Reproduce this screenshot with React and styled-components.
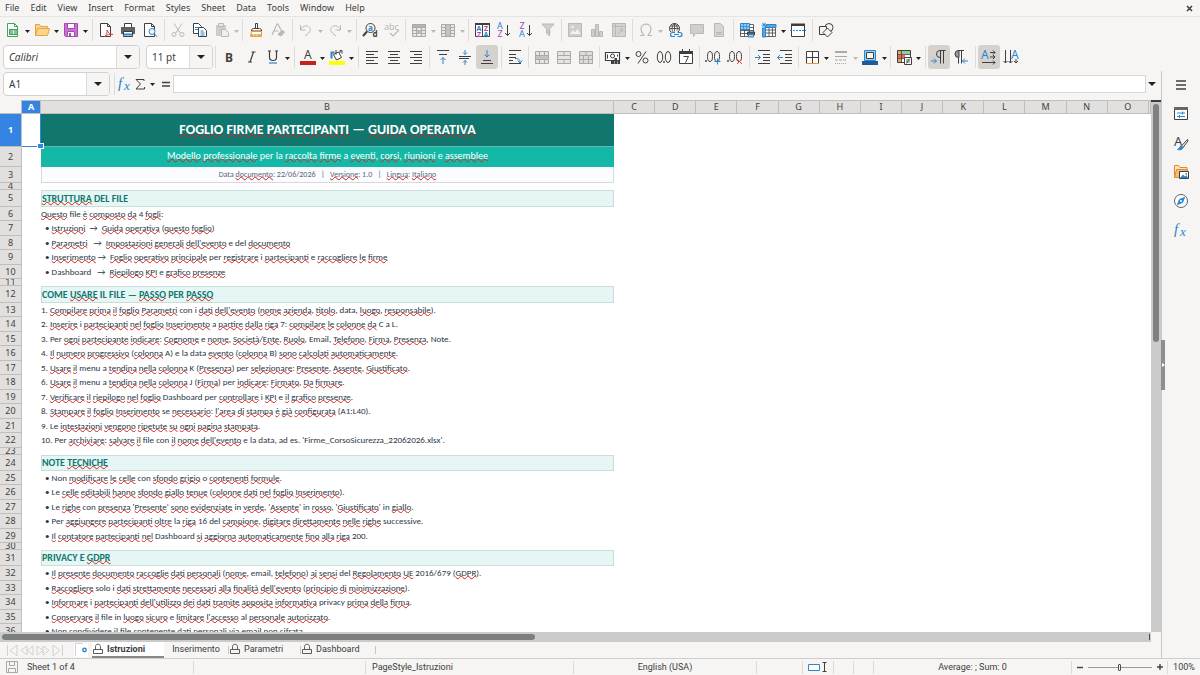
import React from "react";
import styled, { createGlobalStyle, css } from "styled-components";

const ui = '"Noto Sans", "Open Sans", sans-serif';
const compact = 'Roboto, "Noto Sans", sans-serif';
const cellFont = 'Carlito, Lato, "Noto Sans", sans-serif';
const ink = "#3f3f3f";
const line = "#d3d1cf";
const blue = "#2a85cf";
const dim = "#b9b8b6";

const Global = createGlobalStyle`
  *, *::before, *::after { box-sizing: border-box; }
  html, body, #root { height: 100%; }
  body { margin: 0; overflow: hidden; background: #f6f5f3; font: 10px/14px ${ui}; color: #3c3c3c; }
  button, input { font: inherit; color: inherit; }
  svg { overflow: visible; }
`;

/* ---------- frame ---------- */
const Shell = styled.div`
  height: 100vh;
  display: flex;
  flex-direction: column;
`;
const MenuBar = styled.nav`
  display: flex;
  align-items: center;
  gap: 11px;
  height: 17px;
  flex: none;
  padding: 0 6px 0 5px;
  border-bottom: 1px solid #e6e4e2;
  font-size: 9px;
`;
const MenuItem = styled.button`
  border: 0;
  padding: 0;
  background: none;
`;
const CloseDoc = styled.button`
  display: flex;
  border: 0;
  padding: 0;
  background: none;
  margin-left: auto;
`;
const Toolbar = styled.div`
  display: flex;
  align-items: center;
  height: ${(p) => p.$h}px;
  flex: none;
  padding-left: ${(p) => p.$inset}px;
`;
const ToolButton = styled.button`
  display: grid;
  place-items: center;
  flex: none;
  width: 22px;
  height: 24px;
  border: 0;
  border-radius: 3px;
  padding: 0;
  background: ${(p) => (p.$on ? "#d5d1cd" : "none")};
`;
const DropButton = styled.button`
  display: grid;
  place-items: center;
  flex: none;
  width: 7px;
  height: 24px;
  border: 0;
  padding: 2px 0 0;
  background: none;
`;
const Separator = styled.span`
  flex: none;
  width: ${(p) => (p.$wide ? 6 : 5)}px;
  height: 22px;
  background: linear-gradient(#dedcda, #dedcda) center / 1px 100% no-repeat;
`;
const Combo = styled.div`
  display: flex;
  flex: none;
  width: ${(p) => p.$w}px;
  height: 24px;
  margin-right: ${(p) => p.$after || 0}px;
  border: 1px solid ${line};
  border-radius: 4px;
  background: #fff;
  overflow: hidden;
`;
const ComboInput = styled.input`
  flex: 1;
  min-width: 0;
  border: 0;
  padding: 0 5px;
  background: none;
  font-style: ${(p) => (p.$italic ? "italic" : "normal")};
`;
const ComboArrow = styled.button`
  display: grid;
  place-items: center;
  flex: none;
  width: 23px;
  border: 0;
  border-left: 1px solid #dddbd9;
  padding: 0;
  background: #f6f5f4;
`;
const Middle = styled.div`
  flex: 1;
  min-height: 0;
  display: flex;
`;
const Work = styled.main`
  position: relative;
  flex: 1;
  min-width: 0;
  display: flex;
  flex-direction: column;
`;
const FormulaBar = styled.div`
  display: flex;
  align-items: center;
  flex: none;
  height: 29px;
  padding: 0 4px 3px 3px;
`;
const FormulaButton = styled.button`
  display: grid;
  place-items: center;
  flex: none;
  width: ${(p) => p.$w}px;
  height: 22px;
  border: 0;
  padding: 0;
  background: none;
`;
const FormulaInput = styled.input`
  flex: 1;
  min-width: 0;
  height: 18px;
  border: 1px solid #d9d7d5;
  padding: 0 4px;
  background: #fff;
`;

/* ---------- sheet ---------- */
const SheetArea = styled.div`
  flex: 1;
  min-height: 0;
  display: flex;
`;
const SheetView = styled.div`
  flex: 1;
  min-width: 0;
  overflow: hidden;
  background: #fff;
`;
const Grid = styled.table`
  width: 100%;
  table-layout: fixed;
  border-collapse: separate;
  border-spacing: 0;
`;
const ColHead = styled.th`
  height: 14px;
  padding: 0;
  font-weight: ${(p) => (p.$on ? 700 : 400)};
  font-size: 9px;
  line-height: 12px;
  color: ${(p) => (p.$on ? "#fff" : ink)};
  background: ${(p) => (p.$on ? "#3584e4" : "#e1e0de")};
  border: solid #bfbebc;
  border-width: 1px 1px 1px 0;
`;
const Corner = styled.th`
  padding: 0;
  background: #f6f5f3;
  border: solid #bfbebc;
  border-width: 0 1px 1px 0;
`;
const RowHead = styled.th`
  height: ${(p) => p.$h}px;
  padding: 0;
  font-size: 9px;
  font-weight: ${(p) => (p.$on ? 700 : 400)};
  color: ${(p) => (p.$on ? "#fff" : ink)};
  background: ${(p) => (p.$on ? "#3584e4" : "#e1e0de")};
  border: solid #bfbebc;
  border-width: 0 1px 1px 0;
`;
const Clip = styled.div`
  height: ${(p) => p.$h}px;
  line-height: ${(p) => p.$h}px;
  overflow: hidden;
  white-space: pre;
`;
const kinds = {
  title: css`
    text-align: center;
    font-size: 14px;
    font-weight: 700;
    color: #fff;
    background: #10766e;
    border-bottom: 1px solid #6fb5ae;
  `,
  subtitle: css`
    text-align: center;
    font-size: 10px;
    color: #fff;
    background: #14b8a6;
  `,
  meta: css`
    text-align: center;
    font-size: 8px;
    color: #5b6675;
    background: #fafcff;
    border: solid #d5d9de;
    border-width: 0 1px 1px 1px;
  `,
  section: css`
    font-size: 10px;
    font-weight: 700;
    color: #10766e;
    background: #e6f6f4;
    border: 1px solid #c8dedb;
  `,
  text: css`
    color: #2c3644;
    font-size: 9px;
  `,
};
const Cell = styled.td`
  padding: 0;
  vertical-align: top;
  font-family: ${cellFont};
  ${(p) => kinds[p.$kind]}
`;
const Active = styled.td`
  position: relative;
  padding: 0;
  border-bottom: 1px solid #3584e4;
  border-right: 1px solid #3584e4;
  &::after {
    content: "";
    position: absolute;
    right: -3px;
    bottom: -2px;
    width: 5px;
    height: 4px;
    background: #3584e4;
    outline: 1px solid #fff;
  }
`;
const Blank = styled.td`
  padding: 0;
`;
const Typo = styled.span`
  text-decoration: underline wavy #d8201c 1px;
  text-decoration-skip-ink: none;
  text-underline-offset: -1px;
`;
const VTrack = styled.div`
  flex: none;
  width: 10px;
  background: #cbcbcb;
  border-top: 2px solid #3c3c3c;
  padding: 2px 2px 0;
`;
const VThumb = styled.div`
  height: 45%;
  border-radius: 3px;
  background: #808080;
`;
const HTrack = styled.div`
  flex: none;
  height: 10px;
  margin-right: 10px;
  padding: 2px;
  background: linear-gradient(#4c4c4c, #4c4c4c) right 1px center / 1px 6px no-repeat #cbcbcb;
`;
const HThumb = styled.div`
  width: 46.5%;
  height: 6px;
  border-radius: 3px;
  background: #7d7f7e;
`;
const Tabs = styled.div`
  display: flex;
  align-items: center;
  flex: none;
  height: 16px;
  padding-left: 5px;
  font: 9px/14px ${ui};
`;
const TabNav = styled.button`
  display: grid;
  place-items: center;
  width: 15px;
  height: 14px;
  border: 0;
  padding: 0;
  background: none;
`;
const AddTab = styled.button`
  display: grid;
  place-items: center;
  width: 14px;
  height: 14px;
  margin: 0 4px 0 9px;
  border: 0;
  padding: 0;
  background: #fff;
`;
const Tab = styled.button`
  display: flex;
  align-items: center;
  justify-content: ${(p) => (p.$locked ? "flex-start" : "center")};
  gap: 4px;
  width: ${(p) => p.$w}px;
  height: 16px;
  border: 0;
  border-bottom: 2px solid ${(p) => (p.$on ? "#8a8987" : "transparent")};
  padding: 0 1px;
  background: ${(p) => (p.$on ? "#fff" : "none")};
  font-family: ${compact};
  font-weight: ${(p) => (p.$on ? 700 : 400)};
`;
const TabRule = styled.span`
  width: 1px;
  height: 8px;
  background: #c5c4c2;
`;

/* ---------- sidebar and status ---------- */
const Sidebar = styled.aside`
  display: flex;
  flex-direction: column;
  align-items: center;
  gap: 5px;
  flex: none;
  width: 39px;
  padding-top: 2px;
  border-left: 1px solid #c9c7c5;
`;
const SideButton = styled.button`
  display: grid;
  place-items: center;
  width: 24px;
  height: 24px;
  border: 0;
  padding: 0;
  background: none;
`;
const Grip = styled.button`
  position: absolute;
  right: -4px;
  top: 50%;
  transform: translateY(-50%);
  width: 4px;
  height: 50px;
  border: 0;
  padding: 0;
  background: #8f8e8d;
  display: grid;
  place-items: center;
  z-index: 1;
`;
const Status = styled.footer`
  display: grid;
  grid-template-columns: ${[193, 172, 208, 183, 46, 31, 20, 20, 198, 96, 33].map((n) => `minmax(0, ${n}fr)`).join(" ")};
  align-items: center;
  flex: none;
  height: 17px;
  border-top: 1px solid #cfcdcb;
  font-family: ${compact};
  font-size: 9px;
`;
const StatusCell = styled.div`
  display: flex;
  align-items: center;
  justify-content: ${(p) => (p.$start ? "flex-start" : "center")};
  gap: ${(p) => p.$gap || 0}px;
  height: 13px;
  padding-left: ${(p) => (p.$start ? 6 : 0)}px;
  white-space: nowrap;
  & + & { border-left: 1px solid #dcdad8; }
`;
const ZoomButton = styled.button`
  display: grid;
  place-items: center;
  flex: none;
  width: 8px;
  height: 12px;
  border: 0;
  padding: 0;
  background: none;
`;
const ZoomRange = styled.input`
  appearance: none;
  width: 64px;
  height: 9px;
  margin: 0;
  background: linear-gradient(#9c9b99, #9c9b99) center / 100% 1px no-repeat;
  &::-webkit-slider-thumb {
    appearance: none;
    width: 3px;
    height: 7px;
    border: 1px solid #4d4d4d;
    border-radius: 1px;
    background: #f6f5f3;
  }
`;

/* ---------- icons ---------- */
const Svg = ({ w = 16, h = 16, c = ink, children }) => (
  <svg width={w} height={h} viewBox={`0 0 ${w} ${h}`} fill="none" stroke={c} strokeWidth="1" aria-hidden="true">
    {children}
  </svg>
);
const T = ({ x, y, s = 8, c = ink, f = ui, i, b, children }) => (
  <text x={x} y={y} fontSize={s} fill={c} stroke="none" fontFamily={f} fontStyle={i ? "italic" : "normal"} fontWeight={b ? 700 : 400}>
    {children}
  </text>
);
const Tri = ({ c = "#222", w = 5 }) => (
  <svg width={w} height={Math.ceil(w / 2)} viewBox="0 0 10 6" preserveAspectRatio="none" aria-hidden="true">
    <path d="M0 0h10L5 6z" fill={c} />
  </svg>
);
const serif = '"Liberation Serif", serif';
const page = "M3.5 1.5h6l3 3v10h-9z";
const gridPath = "M1.5 2.5h13v12h-13zM1.5 5.5h13M1.5 8.5h13M1.5 11.5h13M5.5 2.5v12M10.5 2.5v12";

const icons = {
  new: (
    <Svg c="#3fa45b">
      <path d="M2.500 1.500h7l3 3v10h-10z" fill="#fff" />
      <path d="M9.500 1.500v3h3" />
      <path d="M4 7h9v6H4z" fill="#3fa45b" stroke="none" />
      <path d="M5 9h7M5 11h7M8.500 8v4" stroke="#fff" strokeWidth=".7" />
    </Svg>
  ),
  open: (
    <Svg c="#e8a33d">
      <path d="M1.500 13.500v-11h4l1 2h7v3" fill="#f9d68a" />
      <path d="M1.500 13.500l2-7h12l-2 7z" fill="#fbd58f" />
    </Svg>
  ),
  save: (
    <Svg c="#a44bb0">
      <path d="M1.500 1.500h13v13h-12l-1-1z" fill="#c873d3" />
      <path d="M4.500 1.500h7v5h-7zM4.500 9.500h7v5h-7z" fill="#fff" />
      <path d="M6 11h2v3H6z" fill="#a44bb0" stroke="none" />
    </Svg>
  ),
  pdf: (
    <Svg>
      <path d="M2.500 1.500h7l3 3v10h-10z" fill="#fff" />
      <path d="M9.500 1.500v3h3" />
      <path d="M6.500 14.500c2-1.500 3-4 2.500-6.500 1 3 3 4.500 6 4.500-3-.5-6 0-8.500 2z" stroke="#e3424a" fill="#fff" />
    </Svg>
  ),
  print: (
    <Svg>
      <path d="M4.500 5v-3.500h7V5" fill="#fff" />
      <path d="M1 5h14v7H1z" fill="#5b6268" stroke="none" />
      <path d="M3.500 9.500h9v5h-9z" fill="#fff" />
      <path d="M4 11.500h8v2H4z" fill="#2a85cf" stroke="none" />
    </Svg>
  ),
  preview: (
    <Svg>
      <path d="M2.500 1.500h7l3 3v10h-10z" fill="#fff" />
      <path d="M9.500 1.500v3h3" />
      <circle cx="10" cy="9.500" r="3" stroke={blue} fill="#e9f4fc" />
      <path d="M12.200 11.700l2.800 3" stroke={blue} />
    </Svg>
  ),
  cut: (
    <Svg c={dim}>
      <path d="M4 1.500l6.500 10M12 1.500l-6.500 10" />
      <circle cx="4" cy="12.500" r="2" />
      <circle cx="12" cy="12.500" r="2" />
    </Svg>
  ),
  copy: (
    <Svg>
      <path d="M1.500 1.500h5l3 3v7h-8z" fill="#fff" />
      <path d="M6.500 5.500h5l3 3v6h-8z" fill="#fff" />
      <path d="M3 5.500h3M3 7.500h3M8.500 9h3M8.500 11h4M8.500 13h4" stroke={blue} />
    </Svg>
  ),
  paste: (
    <Svg c={dim}>
      <path d="M2 3h10v11H2z" fill="#cfcdcb" stroke="none" />
      <path d="M4.500 1.500h5v3h-5z" fill="#e9e8e6" />
      <path d="M7.500 7.500h4l3 3v4h-7z" fill="#f0efed" />
    </Svg>
  ),
  brush: (
    <Svg>
      <path d="M7.500 6.500v-5h2v5M3.500 9c0-2 1-2.500 2-2.500h6c1 0 2 .5 2 2.500z" fill="#fff" />
      <path d="M3.500 9.500h10v5h-11z" fill="#fff" stroke="#e8963d" />
      <path d="M3 12h10.500v2.500H3z" fill="#f3a650" stroke="none" />
      <path d="M6 14v-2.500M9 14v-3" stroke="#fff" strokeWidth=".7" />
    </Svg>
  ),
  clear: (
    <Svg c={dim}>
      <path d="M2 13L7 2h1l3 6M4 9h4.500" strokeWidth="1.200" />
      <path d="M8 12.500l4-4.500 2.500 2-3.500 4z" fill={dim} />
    </Svg>
  ),
  undo: (
    <Svg c={dim}>
      <path d="M2.500 3v5h5M2.500 8c2-4 5-5 8-3.500 3 2 2.500 5.500-3.500 9.500" />
    </Svg>
  ),
  redo: (
    <Svg c={dim}>
      <path d="M13.500 3v5h-5M13.500 8c-2-4-5-5-8-3.500-3 2-2.500 5.500 3.500 9.500" />
    </Svg>
  ),
  find: (
    <Svg>
      <circle cx="8.500" cy="6" r="4.500" />
      <path d="M5 9.500l-4 4.500" strokeWidth="2" />
      <T x="6" y="8.500" s="8" c={blue} b>a</T>
      <T x="10.500" y="15" s="8" b>d</T>
    </Svg>
  ),
  abc: (
    <Svg c={dim}>
      <T x="0" y="8" s="9" c={dim}>abc</T>
      <path d="M6 11l3 3 6-6" strokeWidth="1.200" />
    </Svg>
  ),
  rows: (
    <Svg c="#aaa9a7">
      <path d={gridPath} fill="#e9e8e6" />
      <path d="M1.500 2.500h13v3h-13z" fill="#b5b4b2" />
      <path d="M5.500 8.500h5v3h-5z" fill="#bdbcba" stroke="none" />
    </Svg>
  ),
  cols: (
    <Svg c="#aaa9a7">
      <path d={gridPath} fill="#e9e8e6" />
      <path d="M5.500 2.500h5v12h-5z" fill="#c3c2c0" />
    </Svg>
  ),
  sort: (
    <Svg>
      <path d="M1.500 1.500h14v13h-14z" fill="#fff" />
      <path d="M1 1h15v2H1z" fill={ink} stroke="none" />
      <path d="M8.500 2v12" />
      <T x="2.500" y="9" s="7" c={blue} b>A</T>
      <T x="3" y="14.500" s="7" c="#a44bb0" b>Z</T>
      <T x="10" y="9" s="7" c="#a44bb0" b>Z</T>
      <T x="9.600" y="14.500" s="7" c={blue} b>A</T>
    </Svg>
  ),
  az: (
    <Svg>
      <T x="1" y="7" s="9" c={blue}>A</T>
      <T x="1.500" y="15" s="9" c="#a44bb0">Z</T>
      <path d="M11.500 3v10.500M9 11l2.500 2.500L14 11" />
    </Svg>
  ),
  za: (
    <Svg>
      <T x="1.500" y="7" s="9" c="#a44bb0">Z</T>
      <T x="1" y="15" s="9" c={blue}>A</T>
      <path d="M11.500 3v10.500M9 11l2.500 2.500L14 11" />
    </Svg>
  ),
  filter: (
    <Svg c={dim}>
      <path d="M2 2h12l-4.500 5v7L6.500 11V7z" fill="#cfcecc" />
      <path d="M7 10h4" />
    </Svg>
  ),
  image: (
    <Svg c={dim}>
      <path d="M1.500 1.500h13v13h-13z" fill="#cfcecc" />
      <path d="M3 12l3-4 2 2.500L10.500 7l3 5z" fill="#f4f3f1" stroke="none" />
      <circle cx="5.500" cy="5" r="1" fill="#fff" stroke="none" />
    </Svg>
  ),
  chart: (
    <Svg c={dim}>
      <path d="M2.500 7.500h3v7h-3zM6.500 2.500h3v12h-3zM10.500 9.500h3v5h-3z" fill="#cfcecc" />
    </Svg>
  ),
  pivot: (
    <Svg c={dim}>
      <path d="M1.500 1.500h13v13h-13z" fill="#d4d3d1" />
      <path d="M1.500 4.500h13M4.500 1.500v13M7 12l4.500-5M11.500 10V7H8.500" />
    </Svg>
  ),
  omega: (
    <Svg c={dim}>
      <path d="M2 13.500h4c0-1.500-3-2.500-3-6.500 0-6.500 10-6.500 10 0 0 4-3 5-3 6.500h4" strokeWidth="1.200" />
    </Svg>
  ),
  link: (
    <Svg>
      <circle cx="7.500" cy="6.500" r="5" />
      <path d="M2.500 6.500h10M7.500 1.500v8M3.500 4h8M7.500 1.500c-3 2-3 7-1 9M7.500 1.500c3 2 3 5 2.500 7" strokeWidth=".8" />
      <path d="M2.500 10h13v6h-13z" fill="#f6f5f3" stroke="none" />
      <path d="M8 10.500H5.500a2 2 0 000 4H8M10.500 10.500H13a2 2 0 010 4h-2.500M7 12.500h5" stroke={blue} strokeWidth="1.200" />
    </Svg>
  ),
  comment: (
    <Svg c={dim}>
      <path d="M1.500 2.500h13v9h-8l-2 3v-3h-3z" fill="#d0cfcd" />
    </Svg>
  ),
  header: (
    <Svg c={dim}>
      <path d={page} fill="#d6d5d3" />
      <path d="M5 12h6M5 10.500h6" />
    </Svg>
  ),
  printArea: (
    <Svg>
      <path d={gridPath} fill="#fff" strokeWidth=".8" />
      <path d="M1.500 1.500h9v6h-9z" fill="#8fc6f0" stroke={blue} />
      <path d="M1.500 4.500h9M4.500 1.500v6M7.500 1.500v6" stroke={blue} strokeWidth=".7" />
      <path d="M8.500 10h7v3h-7z" fill="#5b6268" />
      <path d="M9.500 12.500h5v2.500h-5z" fill="#9ed0f5" stroke={blue} />
    </Svg>
  ),
  freeze: (
    <Svg>
      <path d="M4.500 4.500h10v10h-10zM4.500 8h10M4.500 11h10M8 4.500v10M11.500 4.500v10" fill="#fff" strokeWidth=".8" />
      <path d="M5 2.500h10v3H5zM1.500 6h3v9h-3z" fill="#56a7e2" stroke={blue} />
      <path d="M3 .5v5M.5 3h5M1.200 1.200l3.600 3.600M4.800 1.200L1.200 4.800" stroke={blue} strokeWidth=".8" />
    </Svg>
  ),
  split: (
    <Svg>
      <path d="M1.500 2.500h13v12h-13z" fill="#fff" />
      <path d="M1 1.500h14v2.500H1z" fill={ink} stroke="none" />
      <path d="M0 8.500h16" stroke={blue} strokeDasharray="2 1" />
    </Svg>
  ),
  shapes: (
    <Svg>
      <circle cx="11" cy="5.500" r="4" />
      <path d="M1.500 4.500h7v8h-7z" fill="#f6f5f3" />
      <path d="M9.500 6l4.500 4.500-4.500 4.500L5 10.500z" fill="#f6f5f3" />
    </Svg>
  ),
  bold: <Svg><T x="4" y="13" s="12" b>B</T></Svg>,
  italic: <Svg><path d="M8.500 3h4M5 13h4M10.500 3L7 13" strokeWidth="1.200" /></Svg>,
  underline: (
    <Svg>
      <path d="M4.500 2v6.500c0 4 7 4 7 0V2M3 2h3M10 2h3" strokeWidth="1.200" />
      <path d="M4 14h8" stroke={blue} strokeWidth="1.200" />
    </Svg>
  ),
  fontColor: (
    <Svg>
      <T x="4" y="10" s="12">A</T>
      <path d="M0 12h16v4H0z" fill="#c9211e" stroke="none" />
    </Svg>
  ),
  fill: (
    <Svg>
      <path d="M4.500 5.500l5-2.500 3 5.500-5 2.500z" fill="#fff" />
      <path d="M7 1v4.500M11 4V1.500h2v3" />
      <path d="M2.500 9.500v-6h3" stroke={blue} strokeWidth="2" />
      <path d="M0 12h16v4H0z" fill="#ffff00" stroke="none" />
    </Svg>
  ),
  left: <Svg><path d="M2 2.500h12M2 5.500h8M2 8.500h12M2 11.500h8M2 14.500h12" /></Svg>,
  center: <Svg><path d="M2 2.500h12M4 5.500h8M2 8.500h12M4 11.500h8M2 14.500h12" /></Svg>,
  right: <Svg><path d="M2 2.500h12M6 5.500h8M2 8.500h12M6 11.500h8M2 14.500h12" /></Svg>,
  top: (
    <Svg>
      <path d="M2 1.500h12M4 5.500h8" />
      <path d="M8 15V8.500M5.500 11L8 8.500l2.500 2.500" stroke={blue} />
    </Svg>
  ),
  middle: (
    <Svg>
      <path d="M2 7.500h12M2 9.500h10" />
      <path d="M8 1v4.500M6 3.500l2 2 2-2M8 16v-4.500M6 13.500l2-2 2 2" stroke={blue} />
    </Svg>
  ),
  bottom: (
    <Svg>
      <path d="M4 11.500h8M2 14.500h12" />
      <path d="M8 1v7M5.500 5.500L8 8l2.500-2.500" stroke={blue} />
    </Svg>
  ),
  wrap: (
    <Svg>
      <path d="M2 1.500h12M2 5.500h7M2 8.500h7M2 11.500h4M2 14.500h12" />
      <path d="M8 9.500c4 0 5 1 5 4M10.500 11.500l2.500 2.500 2.500-2.500" stroke={blue} />
    </Svg>
  ),
  merge: (
    <Svg c="#aaa9a7">
      <path d="M1.500 2.500h13v12h-13zM1.500 6.500h13M1.500 10.500h13M5.500 2.500v4M10.500 2.500v4M5.500 10.500v4M10.500 10.500v4" fill="#e6e5e3" />
      <path d="M2 7h12v3H2z" fill="#c3c2c0" stroke="none" />
    </Svg>
  ),
  mergeCells: (
    <Svg c="#aaa9a7">
      <path d="M1.500 2.500h13v12h-13zM1.500 6.500h13M1.500 10.500h13M8 2.500v4M8 10.500v4" fill="#e6e5e3" />
    </Svg>
  ),
  splitCells: (
    <Svg c="#aaa9a7">
      <path d="M1.500 2.500h13v12h-13zM1.500 6.500h13M5.500 6.500v8M10.500 6.500v8M8 2.500v4M1.500 10.500h13" fill="#dddcda" />
    </Svg>
  ),
  currency: (
    <Svg>
      <path d="M.5 3.500h14v8H.5z" fill="#fff" strokeWidth="1.200" />
      <circle cx="7.500" cy="7" r="2" />
      <path d="M2.500 5.500v4M12.500 5.500v2" />
      <path d="M6 11h3v4H6zM9.500 9h2.500v6H9.500zM12.500 11H15v4h-2.500z" fill={ink} stroke="none" />
    </Svg>
  ),
  percent: (
    <Svg>
      <circle cx="4.500" cy="5" r="2.500" />
      <circle cx="11.500" cy="11.500" r="2.500" />
      <path d="M12 2.500l-8 12" />
    </Svg>
  ),
  number: (
    <Svg>
      <ellipse cx="4" cy="8" rx="2.700" ry="5.500" />
      <ellipse cx="12" cy="8" rx="2.700" ry="5.500" />
      <path d="M8 12v2" strokeWidth="1.400" />
    </Svg>
  ),
  date: (
    <Svg>
      <path d="M1.500 2.500h13v12h-13z" fill="#fff" />
      <path d="M1 2h14v3H1z" fill={ink} stroke="none" />
      <path d="M4.500 0v3M11.500 0v3M5.500 7.500h5l-3 6" />
    </Svg>
  ),
  addDec: (
    <Svg>
      <ellipse cx="5" cy="7.500" rx="2.500" ry="5" />
      <ellipse cx="12" cy="7.500" rx="2.500" ry="5" />
      <path d="M1 11v2" strokeWidth="1.400" />
      <path d="M12.500 9.500v6M9.500 12.500h6" stroke={blue} />
    </Svg>
  ),
  delDec: (
    <Svg>
      <ellipse cx="5" cy="7.500" rx="2.500" ry="5" />
      <ellipse cx="12" cy="7.500" rx="2.500" ry="5" />
      <path d="M1 11v2" strokeWidth="1.400" />
      <path d="M10 10l5 5M15 10l-5 5" stroke="#e3424a" />
    </Svg>
  ),
  indent: (
    <Svg>
      <path d="M3 1.500h12M8 5.500h7M8 8.500h7M8 11.500h7M3 14.500h12" />
      <path d="M0 8.500h5.500M3 6l2.500 2.500L3 11" stroke={blue} />
    </Svg>
  ),
  outdent: (
    <Svg>
      <path d="M3 1.500h12M8 5.500h7M8 8.500h7M8 11.500h7M3 14.500h12" />
      <path d="M6 8.500H.5M3 6L.5 8.500 3 11" stroke={blue} />
    </Svg>
  ),
  borders: (
    <Svg>
      <path d="M2.500 2.500h12v12h-12zM8.500 2.500v12M2.500 8.500h12" fill="#fff" />
      <path d="M2 14.500h13" stroke="#e8963d" />
    </Svg>
  ),
  lineStyle: (
    <Svg c="#aaa9a7">
      <path d="M2 3h12" strokeWidth="2" />
      <path d="M2 7.500h12" />
      <path d="M2 11h12" strokeDasharray="3 1" />
      <path d="M2 14.500h12" strokeDasharray="1 1" />
    </Svg>
  ),
  lineColor: (
    <Svg>
      <path d="M2.500 1.500h11v10h-11z" fill="#9ed0f5" stroke={blue} />
      <path d="M4.500 3.500h7v6h-7z" fill="#f6f5f3" />
      <path d="M0 12h16v4H0z" fill="#1f5a9a" stroke="none" />
    </Svg>
  ),
  conditional: (
    <Svg>
      <path d="M1.500 1.500h13v12h-13z" fill="#fff" />
      <path d="M5 2h9v3H5z" fill="#8ad29b" stroke="none" />
      <path d="M2 6h7v3H2z" fill="#e8685f" stroke="none" />
      <path d="M2 2h3v3H2zM2 10h4v3H2z" fill="#f0a24a" stroke="none" />
      <path d="M1.500 5.500h13M1.500 9.500h7M5.500 1.500v12" strokeWidth=".8" />
      <path d="M8.500 8.500h7v7h-7z" fill="#fff" />
      <path d="M10 11h4M10 13h4M13.500 9.500l-3 5" strokeWidth=".8" />
    </Svg>
  ),
  ltr: (
    <Svg>
      <path d="M14.500 1.500H9a3.500 3.500 0 000 7M9.500 1.500v13M12.500 1.500v13" />
      <path d="M0 12h5.500M3 9.500L5.500 12 3 14.500" stroke={blue} />
    </Svg>
  ),
  rtl: (
    <Svg>
      <path d="M5 1.500h6M5.500 8.500v6M8.500 1.500v13" />
      <path d="M6 1.500H5.500a3.500 3.500 0 000 7H6z" fill="#9b9a98" />
      <path d="M15 12H9.500M12 9.500L9.500 12l2.500 2.500" stroke={blue} />
    </Svg>
  ),
  horizontal: (
    <Svg>
      <T x="0" y="10" s="12" c={blue}>A</T>
      <path d="M9 3.500h5M12 1.500l2 2-2 2M9 8h5M12 6l2 2-2 2M1 13.500h13M12 11.500l2 2-2 2" />
    </Svg>
  ),
  vertical: (
    <Svg>
      <T x="8" y="10" s="12" c={blue}>A</T>
      <path d="M2.500 1v13M.5 12l2 2 2-2M7.500 1v13M5.500 12l2 2 2-2M13 10v4M11 12l2 2 2-2" />
    </Svg>
  ),
  fx: (
    <Svg c={blue}>
      <T x="1" y="12" s="15" c={blue} f={serif} i>f</T>
      <T x="7" y="14" s="13" c={blue} f={serif} i>x</T>
    </Svg>
  ),
  sum: (
    <Svg w={12} h={14}>
      <path d="M10 4V2.500H2L6.500 7 2 12h8.500v-2" />
    </Svg>
  ),
  equals: (
    <Svg w={10} h={10}>
      <path d="M1 3.500h8M1 7h8" strokeWidth="1.400" />
    </Svg>
  ),
  menu: (
    <Svg>
      <path d="M3 4h10M3 8h10M3 12h10" strokeWidth="1.300" />
    </Svg>
  ),
  properties: (
    <Svg>
      <path d="M1.500 1.500h13v12h-13z" fill="#fff" />
      <path d="M1 1h14v3H1z" fill="#666" stroke="none" />
      <path d="M4 7h8M4 10.500h8M9.500 5.500v3M6.500 9v3" stroke={blue} />
    </Svg>
  ),
  styles: (
    <Svg>
      <T x="1" y="11" s="13">A</T>
      <path d="M14.500 4.500L8 11.500l1.500 1.500L15 6z" fill="#fff" />
      <path d="M8.500 11c-2 0-2 3-4 3.500 3 .8 5 0 5.500-2z" fill={blue} stroke={blue} />
    </Svg>
  ),
  gallery: (
    <Svg c="#e08a2e">
      <path d="M1.500 13.500v-12h4l1.500 2h7v2" fill="#fbe3c4" />
      <path d="M1.500 13.500l2-8h11v8z" fill="#f7bb78" />
      <path d="M6.500 7.500h9v7h-9z" fill="#fff" stroke={ink} />
      <path d="M7 14l3-3.500 2 2 1.500-1.500 1.500 3z" fill={blue} stroke="none" />
      <path d="M12.500 9h1.500v1.500h-1.500z" fill={blue} stroke="none" />
    </Svg>
  ),
  navigator: (
    <Svg c="#5b6268">
      <circle cx="8" cy="8" r="6.500" fill="#fff" />
      <path d="M11.500 4.500L9.500 9.500 4.500 11.500 6.500 6.500z" fill={blue} stroke={blue} />
      <circle cx="8" cy="8" r="1" fill="#fff" stroke="none" />
    </Svg>
  ),
  lock: (
    <Svg w={10} h={12} c="#5c5c5c">
      <path d="M.5 6.500h9v4h-9zM2.500 6.500v-3c0-3 5-3 5 0v3" />
    </Svg>
  ),
};

/* ---------- data ---------- */
const standardBar = [
  "new+", "open+", "save+", "||", "pdf", "print", "preview", "||", "cut", "copy", "paste-", "|", "brush", "clear", "||",
  "undo-", "redo-", "||", "find", "abc", "|", "rows-", "cols-", "|", "sort", "az", "za", "filter", "|", "image", "chart",
  "pivot", "|", "omega-", "link", "comment", "header", "||", "printArea", "freeze+", "split", "||", "shapes",
];
const formatBar = [
  "|", "bold", "italic", "underline+", "||", "fontColor+", "fill+", "||", "left", "center", "right", "|", "top", "middle",
  "*bottom", "||", "wrap", "|", "merge", "mergeCells", "splitCells", "|", "currency+", "percent", "number", "date", "|",
  "addDec", "delDec", "||", "indent", "outdent", "|", "borders+", "lineStyle-", "lineColor+", "|", "conditional+", "||",
  "*ltr", "rtl", "||", "*horizontal", "vertical",
];
const menus = ["File", "Edit", "View", "Insert", "Format", "Styles", "Sheet", "Data", "Tools", "Window", "Help"];
const columns = "CDEFGHIJKLMNO".split("");
const rows = [
  [33, "title", "FOGLIO FIRME PARTECIPANTI — GUIDA OPERATIVA"],
  [20, "subtitle", "Modello professionale per la raccolta firme a eventi, corsi, riunioni e assemblee"],
  [16, "meta", "Data documento: 22/06/2026   |   Versione: 1.0   |   Lingua: Italiano"],
  [7],
  [17, "section", "STRUTTURA DEL FILE"],
  [14, "text", "Questo file è composto da 4 fogli:"],
  [15, "text", "  • Istruzioni  →  Guida operativa (questo foglio)"],
  [14, "text", "  • Parametri   →  Impostazioni generali dell'evento e del documento"],
  [15, "text", "  • Inserimento →  Foglio operativo principale per registrare i partecipanti e raccogliere le firme"],
  [14, "text", "  • Dashboard   →  Riepilogo KPI e grafico presenze"],
  [7],
  [17, "section", "COME USARE IL FILE — PASSO PER PASSO"],
  [14, "text", "1. Compilare prima il foglio Parametri con i dati dell'evento (nome azienda, titolo, data, luogo, responsabile)."],
  [15, "text", "2. Inserire i partecipanti nel foglio Inserimento a partire dalla riga 7: compilare le colonne da C a L."],
  [14, "text", "3. Per ogni partecipante indicare: Cognome e nome, Società/Ente, Ruolo, Email, Telefono, Firma, Presenza, Note."],
  [15, "text", "4. Il numero progressivo (colonna A) e la data evento (colonna B) sono calcolati automaticamente."],
  [14, "text", "5. Usare il menu a tendina nella colonna K (Presenza) per selezionare: Presente, Assente, Giustificato."],
  [15, "text", "6. Usare il menu a tendina nella colonna J (Firma) per indicare: Firmato, Da firmare."],
  [14, "text", "7. Verificare il riepilogo nel foglio Dashboard per controllare i KPI e il grafico presenze."],
  [15, "text", "8. Stampare il foglio Inserimento se necessario: l'area di stampa è già configurata (A1:L40)."],
  [14, "text", "9. Le intestazioni vengono ripetute su ogni pagina stampata."],
  [15, "text", "10. Per archiviare: salvare il file con il nome dell'evento e la data, ad es. 'Firme_CorsoSicurezza_22062026.xlsx'."],
  [7],
  [16, "section", "NOTE TECNICHE"],
  [14, "text", "  • Non modificare le celle con sfondo grigio o contenenti formule."],
  [15, "text", "  • Le celle editabili hanno sfondo giallo tenue (colonne dati nel foglio Inserimento)."],
  [14, "text", "  • Le righe con presenza 'Presente' sono evidenziate in verde, 'Assente' in rosso, 'Giustificato' in giallo."],
  [15, "text", "  • Per aggiungere partecipanti oltre la riga 16 del campione, digitare direttamente nelle righe successive."],
  [14, "text", "  • Il contatore partecipanti nel Dashboard si aggiorna automaticamente fino alla riga 200."],
  [7],
  [16, "section", "PRIVACY E GDPR"],
  [15, "text", "  • Il presente documento raccoglie dati personali (nome, email, telefono) ai sensi del Regolamento UE 2016/679 (GDPR)."],
  [14, "text", "  • Raccogliere solo i dati strettamente necessari alla finalità dell'evento (principio di minimizzazione)."],
  [15, "text", "  • Informare i partecipanti dell'utilizzo dei dati tramite apposita informativa privacy prima della firma."],
  [14, "text", "  • Conservare il file in luogo sicuro e limitare l'accesso al personale autorizzato."],
  [15, "text", "  • Non condividere il file contenente dati personali via email non cifrata."],
];
const known = new Set(
  "DEL FILE COME IL PER NOTE PRIVACY E Data file e del per la a i con data Per Email Note o C L A B K J menu se Dashboard Le ad es Non in solo privacy email al successive via non".split(" ")
);

/* Words outside the spelling dictionary get the wavy underline. */
function Spelled({ text }) {
  return text.split(/([\p{L}]+(?:'[\p{L}]+)?(?:_\w+)?)/u).map((part, i) =>
    i % 2 === 0 || known.has(part) || part.includes("_") || part === "xlsx" ? part : <Typo key={i}>{part}</Typo>
  );
}

function Tools({ items }) {
  return items.map((item, i) => {
    if (item[0] === "|") return <Separator key={i} $wide={item === "||"} />;
    const name = item.replace(/[*+-]/g, "");
    return (
      <React.Fragment key={i}>
        <ToolButton $on={item[0] === "*"} aria-label={name}>{icons[name]}</ToolButton>
        {/[+-]$/.test(item) && (
          <DropButton aria-label={`${name} options`}>
            <Tri c={item.endsWith("-") ? dim : "#222"} w={5} />
          </DropButton>
        )}
      </React.Fragment>
    );
  });
}

const ComboBox = ({ label, value, ...rest }) => (
  <Combo {...rest}>
    <ComboInput aria-label={label} defaultValue={value} $italic={value === "Calibri"} />
    <ComboArrow aria-label={`${label} list`}><Tri w={8} /></ComboArrow>
  </Combo>
);

function Sheet() {
  return (
    <Grid>
      <colgroup>
        <col style={{ width: 22 }} />
        <col style={{ width: 19 }} />
        <col style={{ width: 573 }} />
        {columns.map((c) => <col key={c} />)}
        <col style={{ width: 2 }} />
      </colgroup>
      <thead>
        <tr>
          <Corner />
          <ColHead $on>A</ColHead>
          <ColHead>B</ColHead>
          {columns.map((c) => <ColHead key={c}>{c}</ColHead>)}
          <ColHead />
        </tr>
      </thead>
      <tbody>
        {rows.map(([h, kind, text], i) => (
          <tr key={i}>
            <RowHead $h={h} $on={i === 0}><Clip $h={h - 1}>{i + 1}</Clip></RowHead>
            {i === 0 ? <Active /> : <Blank />}
            <Cell $kind={kind}>{text && <Clip $h={kind === "text" ? h - 1 : h - 2}><Spelled text={text} /></Clip>}</Cell>
            <Blank colSpan={14} />
          </tr>
        ))}
      </tbody>
    </Grid>
  );
}

const tabNav = [
  ["First sheet", "M2.500 1v11M12 1L5 6.500 12 12z"],
  ["Previous sheet", "M13 2L7 6.500 13 11zM7 2L1 6.500 7 11z"],
  ["Next sheet", "M2 2l6 4.500L2 11zM8 2l6 4.500L8 11z"],
  ["Last sheet", "M12.500 1v11M3 1l7 5.500L3 12z"],
];

export default function App() {
  return (
    <Shell>
      <Global />
      <MenuBar>
        {menus.map((m) => <MenuItem key={m}>{m}</MenuItem>)}
        <CloseDoc aria-label="Close document">
          <Svg w={9} h={9}><path d="M2 2l5 5M7 2L2 7" strokeWidth="1.600" /></Svg>
        </CloseDoc>
      </MenuBar>
      <Toolbar $inset={2} $h={26}><Tools items={standardBar} /></Toolbar>
      <Toolbar $inset={3} $h={28}>
        <ComboBox label="Font name" value="Calibri" $w={137} $after={6} />
        <ComboBox label="Font size" value="11 pt" $w={67} />
        <Tools items={formatBar} />
      </Toolbar>
      <Middle>
        <Work>
          <FormulaBar>
            <ComboBox label="Name box" value="A1" $w={107} $after={2} />
            <Separator />
            <FormulaButton $w={16} aria-label="Function wizard">{icons.fx}</FormulaButton>
            <FormulaButton $w={14} aria-label="Select function">{icons.sum}</FormulaButton>
            <FormulaButton $w={11} aria-label="Function options"><Tri /></FormulaButton>
            <FormulaButton $w={15} aria-label="Formula">{icons.equals}</FormulaButton>
            <FormulaInput aria-label="Input line" />
            <FormulaButton $w={11} aria-label="Expand formula bar"><Tri w={8} /></FormulaButton>
          </FormulaBar>
          <SheetArea>
            <SheetView><Sheet /></SheetView>
            <VTrack><VThumb /></VTrack>
          </SheetArea>
          <HTrack><HThumb /></HTrack>
          <Tabs>
            {tabNav.map(([label, d]) => (
              <TabNav key={label} aria-label={label}>
                <Svg w={15} h={13} c="#d2d1cf"><path d={d} /></Svg>
              </TabNav>
            ))}
            <AddTab aria-label="Add sheet">
              <Svg w={14} h={14} c={blue}>
                <path d="M1.500 13V.5h7" stroke="#d5d4d2" />
                <circle cx="10.500" cy="7" r="1.700" strokeWidth="1.400" />
              </Svg>
            </AddTab>
            <Tab $on $locked $w={72}>{icons.lock}Istruzioni</Tab>
            <Tab $w={64}>Inserimento</Tab>
            <TabRule />
            <Tab $locked $w={71}>{icons.lock}Parametri</Tab>
            <TabRule />
            <Tab $locked $w={74}>{icons.lock}Dashboard</Tab>
            <TabRule />
          </Tabs>
          <Grip aria-label="Hide sidebar">
            <svg width="3" height="4" viewBox="0 0 3 4" aria-hidden="true"><path d="M0 0l3 2-3 2z" fill="#fff" /></svg>
          </Grip>
        </Work>
        <Sidebar>
          {["menu", "properties", "styles", "gallery", "navigator", "fx"].map((n) => (
            <SideButton key={n} aria-label={n}>{icons[n]}</SideButton>
          ))}
        </Sidebar>
      </Middle>
      <Status>
        <StatusCell $start $gap={9}>
          <Svg w={12} h={12} c="#a9a8a6"><path d="M.5.5h11v11H.500zM3.500.5v4h5v-4M2.500 11.500v-4h7v4" /></Svg>
          Sheet 1 of 4
        </StatusCell>
        <StatusCell />
        <StatusCell $start>PageStyle_Istruzioni</StatusCell>
        <StatusCell>English (USA)</StatusCell>
        <StatusCell />
        <StatusCell>
          <Svg w={20} h={12}>
            <path d="M.5 3.500h11v6H.5z" fill="#fff" stroke={blue} />
            <path d="M16.500 1.500v9M14.500 1.500h4M14.500 10.500h4" />
          </Svg>
        </StatusCell>
        <StatusCell />
        <StatusCell />
        <StatusCell>Average: ; Sum: 0</StatusCell>
        <StatusCell $gap={4}>
          <ZoomButton aria-label="Zoom out"><Svg w={8} h={8}><path d="M1 4.500h6" strokeWidth="1.400" /></Svg></ZoomButton>
          <ZoomRange type="range" aria-label="Zoom" defaultValue="50" />
          <ZoomButton aria-label="Zoom in"><Svg w={8} h={8}><path d="M1 4h6M4 1v6" strokeWidth="1.400" /></Svg></ZoomButton>
        </StatusCell>
        <StatusCell>100%</StatusCell>
      </Status>
    </Shell>
  );
}
